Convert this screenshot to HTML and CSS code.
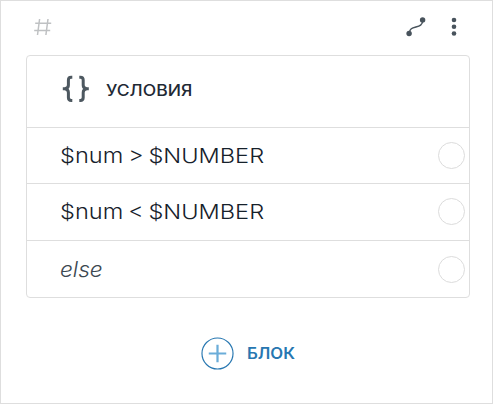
FILE: index.html
```html
<!DOCTYPE html>
<html lang="ru">
<head>
<meta charset="utf-8">
<title>Условия</title>
<link rel="stylesheet" href="styles.css">
</head>
<body>
<main class="node">
  <header class="toolbar">
    <svg class="hash" viewBox="0 0 18 18"><path d="M5.600 1 3.500 17M14 1l-2.100 16M1.200 5.200h16M.2 12.400h16"/></svg>
    <svg class="route" viewBox="0 0 20 20"><path d="M3.200 16.500C3.200 6.800 16.800 13.200 16.800 3"/><circle cx="3.100" cy="16.500" r="2.700"/><circle cx="16.600" cy="2.900" r="2.700"/></svg>
    <svg class="more" viewBox="0 0 6 20"><circle cx="3" cy="3" r="2.300"/><circle cx="3" cy="9.700" r="2.300"/><circle cx="3" cy="16.500" r="2.300"/></svg>
  </header>
  <section class="card">
    <div class="head">
      <svg class="braces" viewBox="0 0 28 28"><path d="M10.300 2.200H9.200Q6.400 2.200 6.400 5v5.200Q6.400 13.200 2.800 13.700H.8h2Q6.400 14.200 6.400 17.400v5.200q0 2.900 2.800 2.900h1.100M17.300 2.200h1.100q2.800 0 2.800 2.800v5.200q0 3 3.600 3.500h2-2q-3.600.5-3.600 3.700v5.200q0 2.900-2.800 2.900h-1.100"/></svg>
      <span class="title">УСЛОВИЯ</span>
    </div>
    <div class="row"><span class="expr">$num &gt; $NUMBER</span><i class="port"></i></div>
    <div class="row tall"><span class="expr">$num &lt; $NUMBER</span><i class="port"></i></div>
    <div class="row last"><span class="else">else</span><i class="port"></i></div>
  </section>
  <footer class="add">
    <svg class="plus" viewBox="0 0 34 34"><circle cx="17" cy="17" r="16"/><path d="M17 8v18M8 17h18"/></svg>
    <span class="label">БЛОК</span>
  </footer>
</main>
</body>
</html>
```
FILE: styles.css
```css
* { box-sizing: border-box; }
body { margin: 0; background: #fff; font-family: Inter, "Open Sans", sans-serif; }
.node { width: 493px; height: 404px; border: 1px solid #dedede; padding: 0 22px 0 25px; }
.toolbar { height: 54px; display: flex; align-items: flex-start; padding: 16px 13px 0 8px; }
.hash { width: 18px; height: 18px; margin-top: 1px; fill: none; stroke: #bfc1c3; stroke-width: 1.5; }
.route { width: 20px; height: 20px; margin-left: auto; fill: #48535c; }
.route path { fill: none; stroke: #48535c; stroke-width: 1.5; }
.more { width: 6px; height: 20px; margin-left: 25px; fill: #48535c; }
.card { width: 444px; height: 243px; border: 1px solid #dedede; border-radius: 4px; }
.head { height: 71px; display: flex; align-items: center; padding: 0 0 5px 35px; }
.braces { width: 28px; height: 28px; fill: none; stroke: #4d5860; stroke-width: 3; }
.title { margin-left: 16px; font-size: 15.5px; font-weight: 500; line-height: 20px; color: #1f2a35; padding-top: 3px; transform: scaleX(1.13); transform-origin: left; }
.row { height: 56px; border-top: 1px solid #dedede; display: flex; align-items: center; justify-content: space-between; padding: 0 4px 0 33px; }
.tall { height: 57px; padding-bottom: 1px; }
.last { height: 57px; }
.expr { font-size: 20.5px; font-weight: 300; color: #16212b; white-space: pre; word-spacing: -1.5px; transform: scaleX(1.15); transform-origin: left; }
.else { font-size: 21px; font-weight: 300; font-style: italic; color: #3c4851; transform: scaleX(1.08); transform-origin: left; }
.port { width: 27px; height: 27px; border: 1px solid #dcdcdc; border-radius: 50%; }
.add { display: flex; align-items: center; height: 34px; margin-top: 38px; padding-left: 175px; }
.plus { width: 33px; height: 33px; fill: none; stroke: #2777b1; stroke-width: 1.2; }
.plus path { stroke: #6badd9; stroke-width: 2.3; }
.label { margin-left: 13px; font-size: 15.5px; font-weight: 600; color: #2777b1; transform: scaleX(1.08); transform-origin: left; }
```
